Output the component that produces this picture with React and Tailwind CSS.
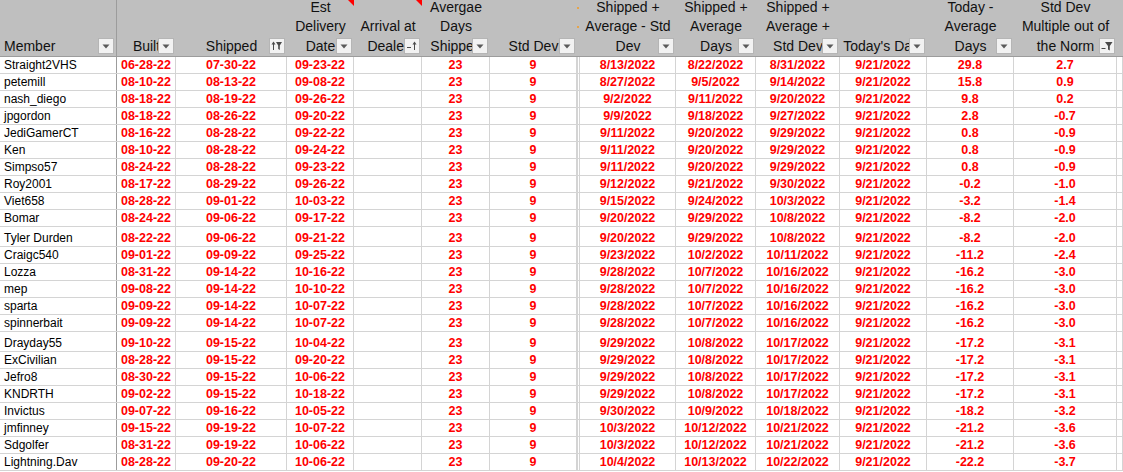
import React from "react";

const widths = [
  "w-[117px]", "w-[59px]", "w-[111px]", "w-[67px]", "w-[68px]", "w-[68px]", "w-[87px]",
  "w-[3px]", "w-[96px]", "w-[80px]", "w-[84px]", "w-[87px]", "w-[87px]", "w-[103px]", "w-[6px]",
];

// header: lines (top to bottom, bottom-aligned) + button kind
const headers = [
  { lines: ["Member"], btn: "drop" },
  { lines: ["Built"], btn: "drop" },
  { lines: ["Shipped"], btn: "sortfilter" },
  { lines: ["Est", "Delivery", "Date"], btn: "drop", flag: true },
  { lines: ["Arrival at", "Dealer"], btn: "sort", flag: true },
  { lines: ["Avergae", "Days", "Shipped"], btn: "drop" },
  { lines: ["Std Dev"], btn: "drop" },
  { lines: [], hidden: true },
  { lines: ["Shipped +", "Average - Std", "Dev"], btn: "drop" },
  { lines: ["Shipped +", "Average", "Days"], btn: "drop" },
  { lines: ["Shipped +", "Average +", "Std Dev"], btn: "drop" },
  { lines: ["Today's Date"], btn: "drop" },
  { lines: ["Today -", "Average", "Days"], btn: "drop" },
  { lines: ["Std Dev", "Multiple out of", "the Norm"], btn: "filter" },
  { lines: [] },
];

const rows = [
  ["Straight2VHS", "06-28-22", "07-30-22", "09-23-22", "8/13/2022", "8/22/2022", "8/31/2022", "29.8", "2.7"],
  ["petemill", "08-10-22", "08-13-22", "09-08-22", "8/27/2022", "9/5/2022", "9/14/2022", "15.8", "0.9"],
  ["nash_diego", "08-18-22", "08-19-22", "09-26-22", "9/2/2022", "9/11/2022", "9/20/2022", "9.8", "0.2"],
  ["jpgordon", "08-18-22", "08-26-22", "09-20-22", "9/9/2022", "9/18/2022", "9/27/2022", "2.8", "-0.7"],
  ["JediGamerCT", "08-16-22", "08-28-22", "09-22-22", "9/11/2022", "9/20/2022", "9/29/2022", "0.8", "-0.9"],
  ["Ken", "08-10-22", "08-28-22", "09-24-22", "9/11/2022", "9/20/2022", "9/29/2022", "0.8", "-0.9"],
  ["Simpso57", "08-24-22", "08-28-22", "09-23-22", "9/11/2022", "9/20/2022", "9/29/2022", "0.8", "-0.9"],
  ["Roy2001", "08-17-22", "08-29-22", "09-26-22", "9/12/2022", "9/21/2022", "9/30/2022", "-0.2", "-1.0"],
  ["Viet658", "08-28-22", "09-01-22", "10-03-22", "9/15/2022", "9/24/2022", "10/3/2022", "-3.2", "-1.4"],
  ["Bomar", "08-24-22", "09-06-22", "09-17-22", "9/20/2022", "9/29/2022", "10/8/2022", "-8.2", "-2.0"],
  ["Tyler Durden", "08-22-22", "09-06-22", "09-21-22", "9/20/2022", "9/29/2022", "10/8/2022", "-8.2", "-2.0"],
  ["Craigc540", "09-01-22", "09-09-22", "09-25-22", "9/23/2022", "10/2/2022", "10/11/2022", "-11.2", "-2.4"],
  ["Lozza", "08-31-22", "09-14-22", "10-16-22", "9/28/2022", "10/7/2022", "10/16/2022", "-16.2", "-3.0"],
  ["mep", "09-08-22", "09-14-22", "10-10-22", "9/28/2022", "10/7/2022", "10/16/2022", "-16.2", "-3.0"],
  ["sparta", "09-09-22", "09-14-22", "10-07-22", "9/28/2022", "10/7/2022", "10/16/2022", "-16.2", "-3.0"],
  ["spinnerbait", "09-09-22", "09-14-22", "10-07-22", "9/28/2022", "10/7/2022", "10/16/2022", "-16.2", "-3.0"],
  ["Drayday55", "09-10-22", "09-15-22", "10-04-22", "9/29/2022", "10/8/2022", "10/17/2022", "-17.2", "-3.1"],
  ["ExCivilian", "08-28-22", "09-15-22", "09-20-22", "9/29/2022", "10/8/2022", "10/17/2022", "-17.2", "-3.1"],
  ["Jefro8", "08-30-22", "09-15-22", "10-06-22", "9/29/2022", "10/8/2022", "10/17/2022", "-17.2", "-3.1"],
  ["KNDRTH", "09-02-22", "09-15-22", "10-18-22", "9/29/2022", "10/8/2022", "10/17/2022", "-17.2", "-3.1"],
  ["Invictus", "09-07-22", "09-16-22", "10-05-22", "9/30/2022", "10/9/2022", "10/18/2022", "-18.2", "-3.2"],
  ["jmfinney", "09-15-22", "09-19-22", "10-07-22", "10/3/2022", "10/12/2022", "10/21/2022", "-21.2", "-3.6"],
  ["Sdgolfer", "08-31-22", "09-19-22", "10-06-22", "10/3/2022", "10/12/2022", "10/21/2022", "-21.2", "-3.6"],
  ["Lightning.Dav", "08-28-22", "09-20-22", "10-06-22", "10/4/2022", "10/13/2022", "10/22/2022", "-22.2", "-3.7"],
];

const tallRows = [10, 16];

function FilterButton({ kind }) {
  return (
    <div className="absolute bottom-[2px] right-[2px] w-[16px] h-[16px] border border-[#b5b5b5] bg-[#f2f2f2]">
      <svg width="14" height="14" viewBox="0 0 14 14" className="block">
        {kind === "drop" && <polygon points="3.5,5.5 10.5,5.5 7,9.5" fill="#5a5a5a" />}
        {kind === "sortfilter" && (
          <g fill="#4a4a4a">
            <rect x="3" y="4" width="1" height="7" />
            <polygon points="1.5,5.5 3.5,2.5 5.5,5.5" />
            <polygon points="6,3 12,3 9.8,6.5 9.8,11 8.2,10 8.2,6.5" />
          </g>
        )}
        {kind === "sort" && (
          <g fill="#4a4a4a">
            <rect x="2" y="8" width="4" height="1" />
            <rect x="9" y="4" width="1" height="7" />
            <polygon points="7.5,5.5 9.5,2.5 11.5,5.5" />
          </g>
        )}
        {kind === "filter" && (
          <g fill="#4a4a4a">
            <rect x="1.5" y="9" width="4" height="1" />
            <polygon points="5,3 12.5,3 9.8,7 9.8,11.5 8,10.5 8,7" />
          </g>
        )}
      </svg>
    </div>
  );
}

export default function App() {
  return (
    <div className="w-[1123px] h-[472px] overflow-hidden bg-white text-black" style={{ fontFamily: "'Liberation Sans', Arial, sans-serif" }}>
      {/* header row */}
      <div className="flex h-[57px] bg-[#bfbfbf] border-b border-[#9c9c9c]">
        {headers.map((h, i) => (
          <div
            key={i}
            className={`relative shrink-0 h-full flex flex-col justify-end overflow-hidden text-[14px] leading-[19.5px] text-[#111] ${widths[i]} ${
              i === 0 ? "border-r border-[#9c9c9c] items-start pl-[4px]" : "items-center"
            }`}
          >
            {h.lines.map((l, j) => (
              <div key={j} className="whitespace-nowrap">{l}</div>
            ))}
            {h.btn && <FilterButton kind={h.btn} />}
            {h.flag && (
              <svg width="6" height="6" viewBox="0 0 6 6" className="absolute top-0 right-0">
                <polygon points="0,0 6,0 6,6" fill="#ff0000" />
              </svg>
            )}
            {h.hidden && (
              <>
                <div className="absolute left-0 top-[7px] w-[2px] h-[2px] bg-[#e6a44a]" />
                <div className="absolute left-0 top-[26px] w-[2px] h-[2px] bg-[#e6a44a]" />
              </>
            )}
          </div>
        ))}
      </div>

      {/* data rows */}
      {rows.map((r, ri) => {
        const cells = [r[0], r[1], r[2], r[3], "", "23", "9", "", r[4], r[5], r[6], "9/21/2022", r[7], r[8], ""];
        return (
          <div key={ri} className={`flex border-b border-[#d4d4d4] ${tallRows.includes(ri) ? "h-[20px]" : "h-[17px]"}`}>
            {cells.map((c, ci) => (
              <div
                key={ci}
                className={`shrink-0 h-full flex items-end overflow-hidden whitespace-nowrap leading-[15px] ${widths[ci]} ${
                  ci === 0
                    ? "border-r border-[#9c9c9c] pl-[4px] text-[12px]"
                    : "justify-center border-r border-[#d4d4d4] text-[12.5px] font-bold text-[#ff0000]"
                } ${ci === 7 ? "border-l" : ""}`}
              >
                {c}
              </div>
            ))}
          </div>
        );
      })}
    </div>
  );
}
